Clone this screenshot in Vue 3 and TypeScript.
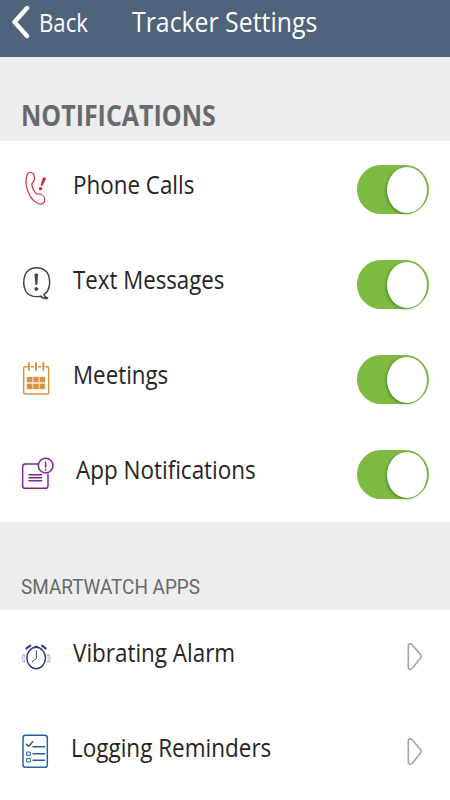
<script setup lang="ts">
import { ref } from 'vue'

interface Row {
  id: string
  label: string
  scale: number
}

const notifications = ref<(Row & { on: boolean })[]>([
  { id: 'phone', label: 'Phone Calls', scale: 0.878, on: true },
  { id: 'text', label: 'Text Messages', scale: 0.873, on: true },
  { id: 'meet', label: 'Meetings', scale: 0.876, on: true },
  { id: 'app', label: 'App Notifications', scale: 0.881, on: true },
])

const apps: Row[] = [
  { id: 'alarm', label: 'Vibrating Alarm', scale: 0.88 },
  { id: 'log', label: 'Logging Reminders', scale: 0.882 },
]
</script>

<template>
  <main class="screen">
    <header class="bar">
      <button class="back" type="button">
        <svg class="chevron" viewBox="0 0 30 44" preserveAspectRatio="none">
          <path d="M27 8 L14.5 22 L27 36" />
        </svg>
        <span class="back-text">Back</span>
      </button>
      <h1 class="title">Tracker Settings</h1>
    </header>

    <h2 class="section strong"><span>NOTIFICATIONS</span></h2>
    <ul class="list notes">
      <li v-for="row in notifications" :key="row.id" class="row" :class="row.id">
        <svg class="icon" viewBox="0 0 180 180">
          <g v-if="row.id === 'phone'" class="red">
            <path d="M53 41 C58 36 69 36 72 44 C75 53 74 61 69 66 C65 69 65 73 66 78 C68 86 72 94 78 100 C82 104 86 101 91 102 C99 104 105 112 104 121 C103 129 96 133 89 132 C77 129 66 119 59 105 C51 90 46 70 49 52 C50 47 51 43 53 41 Z" />
            <path class="fill" d="M98 55 Q106 50 108 56 L97 77 Q94 79 92 75 Z" />
            <circle class="fill" cx="92" cy="86" r="5" />
          </g>
          <g v-else-if="row.id === 'text'" class="ink">
            <path d="M95 124 C72 127 54 121 47 108 C41 96 40 76 45 61 C51 45 64 38 80 38 C99 38 111 47 116 62 C120 77 119 96 113 107 C110 113 106 116 102 119 C103 124 108 128 113 129 C113 132 100 131 92 124" />
            <path class="fill" d="M74 58 Q79 53 84 58 L82 88 Q79 92 76 88 Z" />
            <circle class="fill" cx="79" cy="102" r="5.500" />
          </g>
          <g v-else-if="row.id === 'meet'" class="orange">
            <path d="M51 50 H45 Q41 50 41 55 V128 Q41 132 45 132 H112 Q116 132 116 128 V55 Q116 50 112 50 H106 M64 50 H70 M86 50 H92" />
            <path class="peg" d="M56.500 39 V59 M78 39 V59 M100 39 V59" />
            <path class="fill" d="M51 81 h16 v16 h-16z M70 81 h16 v16 h-16z M89 81 h16 v16 h-16z M51 101 h16 v16 h-16z M70 101 h16 v16 h-16z M89 101 h16 v16 h-16z" />
          </g>
          <g v-else class="purple">
            <path d="M82 57 H46 Q38 57 38 65 V122 Q38 130 46 130 H106 Q114 130 114 122 V88" />
            <circle cx="107" cy="62" r="22" />
            <path d="M107 52 V66 M107 73 V75" />
            <path d="M57 89 H95 M57 98 H95 M57 107 H95" />
          </g>
        </svg>
        <span class="label" :style="{ transform: `scaleX(${row.scale})` }">{{ row.label }}</span>
        <button
          class="toggle"
          :class="{ off: !row.on }"
          type="button"
          role="switch"
          :aria-checked="row.on"
          @click="row.on = !row.on"
        >
          <span class="knob"></span>
        </button>
      </li>
    </ul>

    <h2 class="section"><span>SMARTWATCH APPS</span></h2>
    <ul class="list apps">
      <li v-for="row in apps" :key="row.id" class="row" :class="row.id">
        <svg class="icon" viewBox="0 0 180 180">
          <g v-if="row.id === 'alarm'" class="navy">
            <ellipse cx="78.500" cy="84" rx="28" ry="32" />
            <path class="hands" d="M79 62 V85 L67 95" />
            <path class="bell" d="M49 55 L61 47 M96 47 L107 55" />
            <path class="fill" d="M70 52 Q79 42 88 52 Z" />
            <path class="wave" d="M44 75 Q39 85 44 96 M39 75 Q33 85 39 96 L43 96 M39 75 H43 M113 75 Q118 85 113 96 M118 75 Q124 85 118 96 L114 96 M118 75 H114" />
          </g>
          <g v-else class="blue">
            <rect x="39" y="31" width="73" height="96" rx="8" />
            <path d="M49 58 L56 64 L68 50 M69 65 H104 M69 86 H104 M69 106 H104" />
            <path class="box" d="M51 81 h10 v10 h-10z M51 101 h10 v10 h-10z" />
          </g>
        </svg>
        <span class="label" :style="{ transform: `scaleX(${row.scale})` }">{{ row.label }}</span>
        <svg class="arrow" viewBox="0 0 48 84">
          <path d="M4 7 Q5 2 10 2 L14 4 L41 35 Q44 40 41 44 L15 77 Q7 82 4 75 Z" />
        </svg>
      </li>
    </ul>
  </main>
</template>

<style>
body {
  margin: 0;
  background: #fff;
}
</style>

<style scoped>
.screen {
  width: 450px;
  height: 800px;
  overflow: hidden;
  background: #ededed;
  color: #252525;
  font-family: 'Open Sans', 'Noto Sans', sans-serif;
}

button {
  border: 0;
  padding: 0;
  background: none;
  font: inherit;
  color: inherit;
}

.bar {
  display: flex;
  height: 57px;
  box-sizing: border-box;
  background: #50637d;
  color: #fff;
}

.back {
  display: flex;
  width: 131.500px;
  flex: none;
}

.chevron {
  width: 30px;
  height: 44px;
  margin-right: 8.500px;
  flex: none;
  fill: none;
  stroke: #fff;
  stroke-width: 4.4;
  stroke-linecap: round;
  stroke-linejoin: round;
}

.back-text {
  font-size: 25.5px;
  line-height: 36px;
  margin-top: 4px;
  transform: scaleX(0.87);
  transform-origin: left;
}

.title {
  margin: 3px 0 0;
  font-size: 28px;
  font-weight: 400;
  line-height: 36px;
  white-space: nowrap;
  transform: scaleX(0.887);
  transform-origin: left;
}

.section {
  display: flex;
  height: 87.500px;
  margin: 0;
  padding-left: 21px;
  font-family: Roboto, sans-serif;
  font-size: 20.500px;
  font-weight: 400;
  color: #68696c;
}

.section span {
  margin-top: 53px;
  line-height: 24px;
  white-space: nowrap;
  transform: scaleX(0.922);
  transform-origin: left;
}

.section.strong {
  height: 84px;
  font-family: 'Open Sans', sans-serif;
  font-size: 28px;
  font-weight: 700;
}

.section.strong span {
  margin-top: 40px;
  line-height: 36px;
  transform: scaleX(0.892);
}

.list {
  margin: 0;
  padding: 0;
  list-style: none;
  background: #fff;
}

.notes {
  height: 381px;
}

.apps {
  height: 191px;
}

.row {
  display: flex;
  height: 95px;
  padding: 0 21px 0 10px;
}

.icon {
  width: 60px;
  height: 60px;
  margin-top: 19px;
  flex: none;
  fill: none;
  stroke-width: 4.4;
  stroke-linecap: round;
  stroke-linejoin: round;
}

.apps .icon {
  margin-top: 20.500px;
}

.red { stroke: #c4343a; color: #c4343a; stroke-width: 3.6; }
.ink { stroke: #414247; color: #414247; }
.orange { stroke: #d99141; color: #d99141; }
.purple { stroke: #84219d; color: #84219d; }
.navy { stroke: #343b86; color: #343b86; }
.blue { stroke: #285f9f; color: #285f9f; }

.fill {
  fill: currentColor;
  stroke-width: 0.500;
}

.peg { stroke-width: 6; }
.bell { stroke-width: 6.5; }
.hands { stroke-width: 3; }
.wave { stroke-width: 1.800; opacity: 0.600; }
.box { stroke-width: 3; }

.label {
  margin: 25px 0 0 2.500px;
  flex: 1;
  height: 36px;
  font-size: 25.500px;
  line-height: 36px;
  white-space: nowrap;
  transform-origin: left;
}

.apps .label {
  margin-top: 24px;
}

.row.app .label {
  margin-left: 5.500px;
}

.row.log .label {
  margin-left: 0.500px;
}

.toggle {
  display: flex;
  width: 72px;
  height: 49px;
  margin-top: 24px;
  box-sizing: border-box;
  padding: 1.500px 1.500px 1.500px 30px;
  flex: none;
  border-radius: 24px / 24.500px;
  background: #7dbb42;
}

.knob {
  width: 40px;
  height: 46px;
  border-radius: 50%;
  background: #fff;
  box-shadow: -1px 1px 3px rgba(40, 90, 10, 0.550);
}

.toggle.off {
  padding-left: 1.500px;
  background: #ccc;
}

.arrow {
  width: 16px;
  height: 28px;
  margin: 33px 6px 0 0;
  flex: none;
  fill: none;
  stroke: #a5a5a5;
  stroke-width: 4.8;
  stroke-linejoin: round;
}
</style>
